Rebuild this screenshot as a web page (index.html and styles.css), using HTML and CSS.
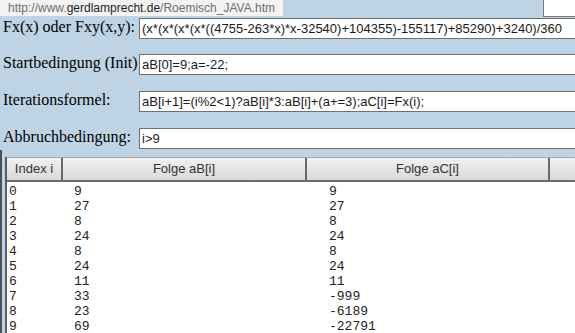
FILE: index.html
```html
<!DOCTYPE html>
<html lang="de">
<head>
    <meta charset="UTF-8">
    <meta name="viewport" content="width=device-width, initial-scale=1.0">
    <title>Roemisch JAVA - Folgen</title>
    <link rel="stylesheet" href="styles.css">
</head>
<body>
    <!-- Status URL tooltip -->
    <div class="status-url">http://www.<span class="domain">gerdlamprecht.de</span>/Roemisch_JAVA.htm</div>

    <div class="topbar">
        <div class="corner-box"></div>
    </div>

    <!-- Parameter Section -->
    <form class="params">
        <div class="row">
            <label for="fx">Fx(x) oder Fxy(x,y):</label>
            <input id="fx" type="text" value="(x*(x*(x*(x*((4755-263*x)*x-32540)+104355)-155117)+85290)+3240)/360">
        </div>
        <div class="row">
            <label for="init">Startbedingung (Init)</label>
            <input id="init" type="text" value="aB[0]=9;a=-22;">
        </div>
        <div class="row">
            <label for="iter">Iterationsformel:</label>
            <input id="iter" type="text" value="aB[i+1]=(i%2&lt;1)?aB[i]*3:aB[i]+(a+=3);aC[i]=Fx(i);">
        </div>
        <div class="row">
            <label for="stop">Abbruchbedingung:</label>
            <input id="stop" type="text" value="i>9">
        </div>
    </form>

    <!-- Result Table -->
    <div class="output">
        <div class="result">
            <div class="head">
                <div class="cell">Index i</div>
                <div class="cell">Folge aB[i]</div>
                <div class="cell">Folge aC[i]</div>
                <div class="cell"></div>
            </div>
            <div class="rows">
                <div class="line"><span>0</span><span>9</span><span>9</span></div>
                <div class="line"><span>1</span><span>27</span><span>27</span></div>
                <div class="line"><span>2</span><span>8</span><span>8</span></div>
                <div class="line"><span>3</span><span>24</span><span>24</span></div>
                <div class="line"><span>4</span><span>8</span><span>8</span></div>
                <div class="line"><span>5</span><span>24</span><span>24</span></div>
                <div class="line"><span>6</span><span>11</span><span>11</span></div>
                <div class="line"><span>7</span><span>33</span><span>-999</span></div>
                <div class="line"><span>8</span><span>23</span><span>-6189</span></div>
                <div class="line"><span>9</span><span>69</span><span>-22791</span></div>
            </div>
        </div>
    </div>
</body>
</html>
```

FILE: styles.css
```css
/* General Styling */
body {
    margin: 0;
    height: 333px;
    overflow: hidden;
    background-color: #bed4e4;
    font-family: 'Liberation Serif', 'Times New Roman', serif;
    color: #000;
    position: relative;
}

/* Status URL tooltip (overlays the page) */
.status-url {
    position: absolute;
    top: 0;
    left: 0;
    width: 275px;
    height: 16px;
    padding-left: 8px;
    background-color: #f3f3f3;
    font-family: 'Liberation Sans', Arial, sans-serif;
    font-size: 12px;
    line-height: 16px;
    color: #6e6e6e;
    white-space: nowrap;
}

.status-url .domain {
    color: #1e1e1e;
}

.topbar {
    display: flex;
    justify-content: flex-end;
    height: 17px;
}

.corner-box {
    width: 31px;
    height: 16px;
    background-color: #fff;
    border-left: 1px solid #7a7a7a;
    border-bottom: 1px solid #7a7a7a;
}

/* Parameter Section */
.params {
    margin: 0;
    padding-top: 1px;
    display: flex;
    flex-direction: column;
}

.row {
    display: flex;
    align-items: flex-start;
    margin-bottom: 16px;
}

.row:first-child {
    margin-bottom: 15px;
}

.row:last-child {
    margin-bottom: 0;
}

.row label {
    width: 136px;
    flex: none;
    padding-left: 3px;
    font-size: 16px;
    white-space: nowrap;
}

/* inputs continue past the right window edge, so no right border */
.row input {
    flex: 1;
    min-width: 0;
    box-sizing: border-box;
    height: 21px;
    margin: 0;
    padding: 0 0 0 2px;
    border: 1px solid #707070;
    border-right: none;
    background-color: #fff;
    font-family: 'Liberation Sans', Arial, sans-serif;
    font-size: 13px;
    color: #1a1a1a;
    outline: none;
}

/* Result Table */
.output {
    margin-top: 1px;
    padding: 7px 0 0 3px;
    border-left: 2px solid #4f4f4f;
    height: 176px;
}

.result {
    border-left: 2px solid #5a5a5a;
    background-color: #fff;
    height: 100%;
    overflow: hidden;
}

.head {
    display: grid;
    grid-template-columns: 56px 244px 243px 1fr;
    height: 22px;
    border-top: 1px solid #a9a9a9;
    border-bottom: 2px solid #6b6b6b;
    background: linear-gradient(#f1f1f1, #d9d9d9);
    font-family: 'Liberation Sans', Arial, sans-serif;
    font-size: 13px;
    line-height: 21px;
    color: #333;
}

.head .cell {
    text-align: center;
    border-right: 2px solid #6b6b6b;
}

.head .cell:last-child {
    border-right: none;
}

.rows {
    padding-top: 2px;
    font-family: 'Liberation Mono', 'Courier New', monospace;
    font-size: 13px;
    line-height: 15px;
    color: #222;
}

.line {
    display: grid;
    grid-template-columns: 65px 255px 1fr;
    padding-left: 2px;
}
```
